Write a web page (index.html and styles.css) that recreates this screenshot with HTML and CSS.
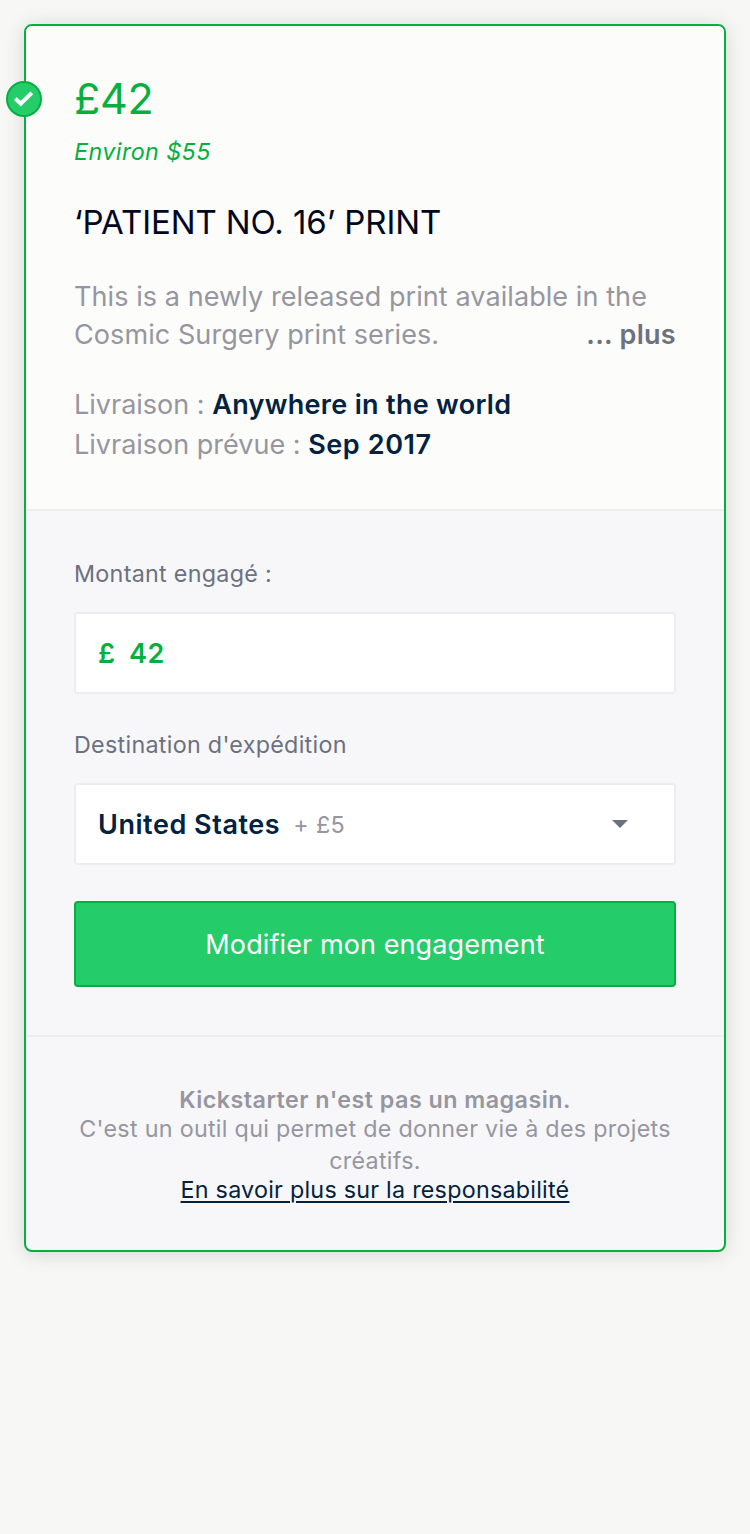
FILE: index.html
```html
<!DOCTYPE html>
<html lang="fr">
<head>
<meta charset="utf-8">
<title>Modifier mon engagement</title>
<link rel="stylesheet" href="styles.css">
</head>
<body>
<main class="card">
  <span class="badge"><svg width="36" height="36" viewBox="0 0 36 36"><circle cx="18" cy="18" r="17" fill="#25cc6a" stroke="#05b03f" stroke-width="2"/><path d="M9.3 17.6 14.7 22.8 25.8 11.9" fill="none" stroke="#fff" stroke-width="4"/></svg></span>
  <section class="reward">
    <div class="price">£42</div>
    <div class="approx">Environ $55</div>
    <h1 class="title">‘PATIENT NO. 16’ PRINT</h1>
    <div class="description"><p class="text">This is a newly released print available in the<br>Cosmic Surgery print series.</p><a class="more">... plus</a></div>
    <div class="shipping">
      <div>Livraison : <b class="place">Anywhere in the world</b></div>
      <div>Livraison prévue : <b class="date">Sep 2017</b></div>
    </div>
  </section>
  <section class="pledge">
    <label class="label">Montant engagé :</label>
    <div class="field amount"><span class="currency">£</span><span>42</span></div>
    <label class="label second">Destination d'expédition</label>
    <div class="field"><b class="country">United States</b><span class="fee">+ £5</span><svg class="caret" width="16" height="8" viewBox="0 0 16 8"><path d="M0 0h16L8 8z" fill="#6b7180"/></svg></div>
    <button class="submit">Modifier mon engagement</button>
  </section>
  <footer class="notice">
    <p class="strong"><b>Kickstarter n'est pas un magasin.</b></p>
    <p class="body">C'est un outil qui permet de donner vie à des projets<br>créatifs.</p>
    <p class="link"><a>En savoir plus sur la responsabilité</a></p>
  </footer>
</main>
</body>
</html>
```
FILE: styles.css
```css
* { box-sizing: border-box; }
body { margin: 0; padding: 24px; min-height: 1534px; background: #f7f7f5; font-family: Inter, "Liberation Sans", sans-serif; }
p, h1 { margin: 0; font-weight: 400; }
b { font-weight: 600; }
.card { position: relative; border: 2px solid #05b03f; border-radius: 8px; background: #f7f7fa; box-shadow: 0 2px 20px rgba(0, 0, 0, 0.14); }
.badge { position: absolute; left: -20px; top: 55px; width: 36px; height: 36px; }
.badge svg { display: block; }
.reward { padding: 46px 48px 44px; border-bottom: 2px solid #ededee; border-radius: 6px 6px 0 0; background: #fcfcfa; }
.price { font-size: 43px; line-height: 52px; letter-spacing: -0.3px; color: #05b03f; }
.approx { margin-top: 12px; font-size: 23.3px; line-height: 32px; letter-spacing: 0.42px; font-style: italic; color: #05b03f; }
.title { margin-top: 34px; font-size: 33px; line-height: 40px; letter-spacing: -0.09px; color: #020621; }
.description { display: flex; justify-content: space-between; align-items: flex-end; margin-top: 36px; font-size: 27px; line-height: 38px; letter-spacing: 0.08px; color: #9696a0; white-space: nowrap; }
.text { width: 0; }
.more { padding-left: 78px; font-weight: 600; letter-spacing: 0.3px; color: #6b7180; background: linear-gradient(90deg, rgba(253, 253, 253, 0), #fcfcfb 60px, #fcfcfa 78px); }
.shipping { margin-top: 31px; font-size: 27px; line-height: 40px; color: #9696a0; }
.shipping b { color: #03223f; }
.place { letter-spacing: 0.31px; }
.date { letter-spacing: 0.6px; }
.pledge { padding: 47px 48px 48px; border-bottom: 2px solid #ededee; }
.label { display: block; font-size: 23.3px; line-height: 32px; letter-spacing: 0.29px; color: #6b7180; }
.second { margin-top: 35px; }
.field { display: flex; align-items: center; height: 82px; margin-top: 22px; padding: 0 46px 0 22px; border: 2px solid #ededee; border-radius: 4px; background: #fff; font-size: 27px; }
.amount { font-weight: 600; letter-spacing: 0.5px; color: #05b03f; }
.currency { width: 31px; }
.country { letter-spacing: 0.54px; color: #03223f; }
.fee { margin-left: 13px; font-size: 23.3px; letter-spacing: 0.4px; color: #9696a0; }
.caret { margin-left: auto; }
.submit { display: block; width: 100%; height: 86px; margin-top: 36px; border: 2px solid #05b03f; border-radius: 4px; background: #25cc6a; color: #fff; font-family: inherit; font-size: 27px; letter-spacing: 0.1px; }
.notice { padding: 49px 0 48px; text-align: center; font-size: 23.3px; color: #9696a0; }
.strong { line-height: 28px; margin-bottom: -1px; letter-spacing: 0.46px; }
.body { line-height: 32px; letter-spacing: 0.29px; }
.link { line-height: 25px; letter-spacing: 0.25px; }
.link a { color: #03223f; text-decoration: underline; text-decoration-thickness: 2px; text-underline-offset: 3px; }
```
